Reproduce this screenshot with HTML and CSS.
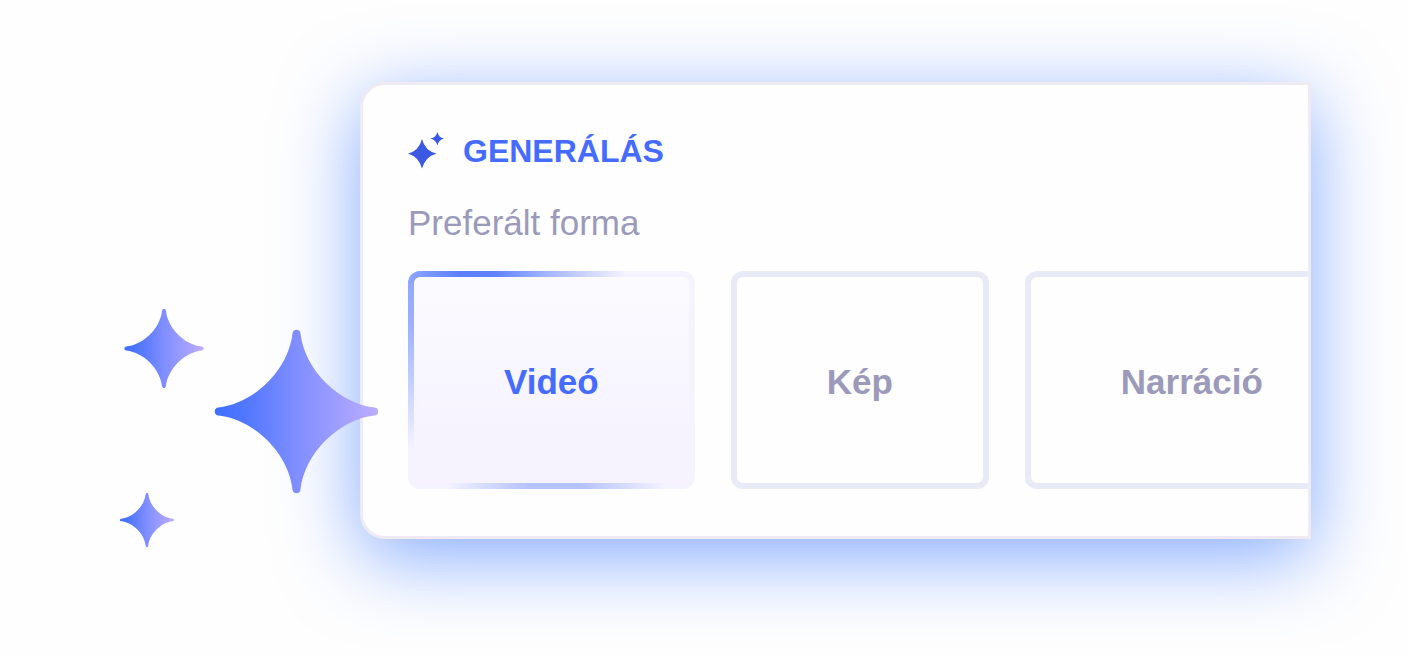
FILE: index.html
```html
<!DOCTYPE html>
<html lang="hu">

<head>
    <meta charset="UTF-8">
    <meta name="viewport" content="width=device-width, initial-scale=1.0">
    <title>Generálás</title>
    <link rel="stylesheet" href="styles.css">
</head>

<body>
    <main class="scene">
        <svg class="sparkles" width="258" height="238" viewBox="0 0 258 238" aria-hidden="true">
            <defs>
                <linearGradient id="sparkleFill">
                    <stop offset="0" stop-color="#3d6eff" />
                    <stop offset="0.22" stop-color="#5679ff" />
                    <stop offset="0.5" stop-color="#808eff" />
                    <stop offset="1" stop-color="#bcadff" />
                </linearGradient>
                <path id="sparkle" fill="url(#sparkleFill)" d="M-4-78C-4-83 4-83 4-78C8-42 42-8 78-4C83-4 83 4 78 4C42 8 8 42 4 78C4 83-4 83-4 78C-8 42-42 8-78 4C-83 4-83-4-78-4C-42-8-8-42-4-78Z" />
            </defs>
            <use href="#sparkle" transform="translate(44 39.5) scale(.484)" />
            <use href="#sparkle" transform="translate(176.500 102.500)" />
            <use href="#sparkle" transform="translate(27 211) scale(.33)" />
        </svg>

        <section class="card">
            <h1 class="card-title">
                <svg class="title-icon" width="37" height="38" viewBox="0 0 37 38" aria-hidden="true">
                    <path d="M14 7Q17 19 28.500 21.500Q17 25 14 36.500Q11 25 0 21.500Q11 19 14 7Z" />
                    <path d="M29.500 0Q30.500 5.500 36 6.500Q30.500 8 29.500 13.500Q28 8 22.500 6.500Q28 5.500 29.500 0Z" />
                </svg>
                GENERÁLÁS
            </h1>
            <p class="card-label" id="formLabel">Preferált forma</p>
            <div class="options" role="group" aria-labelledby="formLabel">
                <button type="button" class="option option-active" aria-pressed="true">Videó</button>
                <button type="button" class="option" aria-pressed="false">Kép</button>
                <button type="button" class="option" aria-pressed="false">Narráció</button>
            </div>
        </section>
    </main>
</body>

</html>
```
FILE: styles.css
```css
* {
    box-sizing: border-box;
}

body {
    margin: 0;
    background-color: #fefefe;
    font-family: 'Liberation Sans', Arial, sans-serif;
}

.scene {
    display: flex;
    align-items: flex-end;
    padding: 82px 96px 108px 120px;
}

/* the big sparkle hangs over the card's left edge */
.sparkles {
    position: relative;
    z-index: 1;
    flex-shrink: 0;
    margin: 0 -18px -8px 0;
}

.card {
    flex: 1;
    min-width: 0;
    overflow: hidden;
    padding: 47px 45px;
    border: 3px solid #f0ebf3;
    border-radius: 25px 0 0 25px;
    background-color: #fefefe;
    box-shadow: 0 18px 80px rgba(70, 127, 255, 0.66);
}

.card-title {
    display: flex;
    align-items: center;
    gap: 18px;
    margin: 0;
    font-size: 32px;
    line-height: 38px;
    color: #456cff;
}

.title-icon {
    fill: #3b59e2;
}

.card-label {
    margin: 32px 0 27px;
    font-size: 35px;
    line-height: 42px;
    color: #9b9aba;
}

.options {
    display: flex;
    gap: 36px;
}

.option {
    flex-shrink: 0;
    padding: 84px 90px 80px;
    border: 6px solid #e8eaf6;
    border-radius: 12px;
    background-color: transparent;
    font-family: inherit;
    font-size: 35px;
    font-weight: bold;
    line-height: 42px;
    color: #9b9aba;
    cursor: pointer;
}

.option-active {
    border-color: transparent;
    background:
        linear-gradient(#fbfbff, #f6f3ff 75%) padding-box,
        linear-gradient(90deg, #8fa7ff, #5b7fff 18%, #6082ff 30%, #a9b9ff 50%, #f5f3ff 76%) 0 0 / 100% 12px no-repeat border-box,
        linear-gradient(#8fa7ff, #9db0ff 25%, #c3ceff 50%, #f5f3ff 82%) 0 0 / 12px 100% no-repeat border-box,
        linear-gradient(90deg, #f5f3ff 13%, #b5c3ff 42%, #b5c3ff 60%, #f5f3ff 90%) 0 100% / 100% 12px no-repeat border-box,
        #f5f3ff border-box;
    color: #456cff;
}
```
